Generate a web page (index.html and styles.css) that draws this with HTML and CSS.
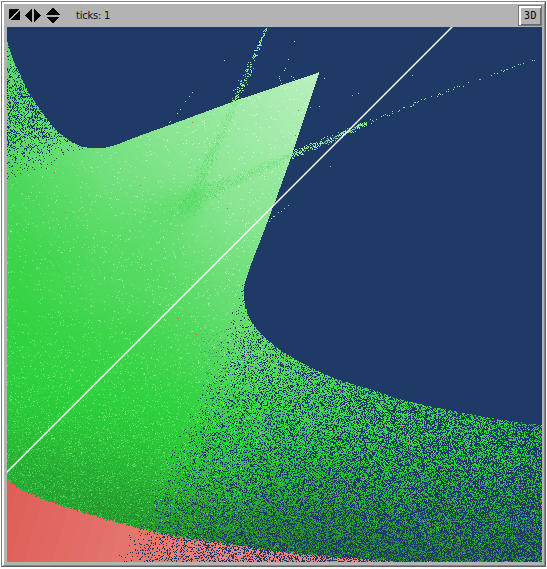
FILE: index.html
```html
<!DOCTYPE html>
<html lang="en">
<head>
<meta charset="utf-8">
<title>View</title>
<link rel="stylesheet" href="styles.css">
</head>
<body>
<main class="frame">
  <div class="panel">
    <header class="toolbar">
      <svg class="icons" width="52" height="17" viewBox="0 0 52 17" shape-rendering="crispEdges">
        <path d="M0 2h10L0 12zM11 3v10H1z"/>
        <path d="M23 1.5v14l-7-7zM25 1.5v14l7-7z"/>
        <path d="M36.500 7.500h14l-7-7zM36.500 9.500h14l-7 7z"/>
      </svg>
      <span class="ticks">ticks: 1</span>
      <button class="view3d">3D</button>
    </header>
    <canvas class="world" id="world" width="535" height="535"></canvas>
  </div>
</main>
<script src="world.js"></script>
</body>
</html>
```
FILE: styles.css
```css
body {
  margin: 0;
  background: #fff;
}

.frame {
  box-sizing: border-box;
  width: 545px;
  height: 566px;
  margin: 1px 0 0 1px;
  border: 1px solid #7b827f;
  border-right: 1px solid #5e5e5e;
  border-bottom: 1px solid #5e5e5e;
}

.panel {
  box-sizing: border-box;
  width: 543px;
  height: 564px;
  border: 2px solid #fff;
  border-right: 1px solid #858585;
  border-bottom: 1px solid #858585;
  padding: 0 2px 0 3px;
  background: #b3b3b3;
}

.toolbar {
  display: flex;
  align-items: flex-start;
  height: 23px;
}

.icons {
  margin: 3px 0 0 2px;
  fill: #000;
}

.ticks {
  margin: 4px 0 0 15px;
  font: 11px/15px "DejaVu Sans Condensed", "DejaVu Sans", sans-serif;
  letter-spacing: -0.2px;
  color: #111;
  white-space: nowrap;
}

.view3d {
  box-sizing: border-box;
  width: 24px;
  height: 21px;
  margin: 1px 0 0 auto;
  padding: 1px 0 0 1px;
  border: 1px solid #777;
  background: #b3b3b3;
  box-shadow: inset 2px 2px 0 #fff, inset -1px -1px 0 #686868;
  font: 10px/18px "DejaVu Sans Mono", monospace;
  letter-spacing: 0.5px;
  color: #000;
}

.world {
  display: block;
  width: 535px;
  height: 535px;
}
```
FILE: world.js
```js
(function () {
  var SIZE = 535, OX = 7, OY = 27;
  var ctx = document.getElementById('world').getContext('2d');
  var img = ctx.createImageData(SIZE, SIZE);
  var seed = 20117;

  function rnd() {
    seed = (seed + 0x6D2B79F5) | 0;
    var t = Math.imul(seed ^ (seed >>> 15), 1 | seed);
    t = (t + Math.imul(t ^ (t >>> 7), 61 | t)) ^ t;
    return ((t ^ (t >>> 14)) >>> 0) / 4294967296;
  }

  function lerp(table, k) {
    if (k <= table[0][0]) return table[0][1];
    for (var i = 1; i < table.length; i++) {
      if (k <= table[i][0]) {
        var a = table[i - 1], b = table[i];
        return a[1] + (b[1] - a[1]) * (k - a[0]) / (b[0] - a[0]);
      }
    }
    return table[table.length - 1][1];
  }

  // Upper limit of the set, y by x, left of the tip
  var crest = [[7, 42], [12, 58], [20, 75], [28, 92], [40, 110], [53, 127], [62, 135], [70, 141],
    [80, 146], [90, 147.5], [100, 148], [108, 146.5], [117, 144], [133, 137.5], [180, 120.5],
    [233, 101], [280, 85], [318, 72]];
  // Right flank, x by y
  var flank = [[72, 319], [137, 297], [153, 292], [200, 275], [233, 262.5], [260, 252],
    [277, 246], [288, 243.3], [296, 243.3], [303, 244.5]];
  // Lower right limit, y by x
  var bowl = [[244, 303], [250, 320], [260, 333], [270, 342], [280, 350], [300, 362], [320, 372],
    [337, 379], [377, 391], [403, 400], [440, 408], [487, 417], [542, 425]];
  // Top of the red set, y by x
  var shore = [[7, 480], [25, 491], [50, 501], [70, 508], [100, 517], [127, 525], [157, 532],
    [180, 537], [213, 542], [247, 547], [283, 552], [320, 555.5], [360, 559], [410, 562]];
  // Left limit of the scattered area, x by y
  var scatter = [[280, 241], [300, 238], [330, 226], [360, 216], [390, 204], [440, 177],
    [490, 155], [525, 138], [562, 120]];

  // Shade: 0 is pure green, 1 white, -1 black
  var shades = [[7, 50, .2], [7, 110, .18], [7, 200, .12], [7, 260, .07], [7, 320, .02],
    [7, 380, 0], [7, 430, -.06], [7, 475, -.22], [60, 140, .27], [60, 200, .21], [60, 280, .12],
    [60, 350, .05], [60, 420, -.01], [60, 465, -.14], [60, 500, -.27], [110, 150, .38],
    [140, 210, .3], [120, 270, .19], [120, 340, .09], [120, 400, .01], [120, 460, -.1],
    [120, 520, -.3], [180, 125, .46], [180, 170, .42], [180, 220, .33], [180, 290, .22],
    [180, 350, .12], [180, 410, .02], [180, 460, -.08], [180, 530, -.3], [240, 105, .54],
    [240, 150, .51], [240, 200, .44], [240, 260, .36], [235, 310, .28], [245, 360, .21],
    [240, 420, .06], [240, 470, -.1], [240, 540, -.34], [280, 90, .62], [280, 140, .57],
    [270, 200, .48], [316, 74, .71], [300, 120, .62], [310, 375, .18], [310, 420, .07],
    [310, 480, -.14], [310, 545, -.35], [390, 400, .13], [390, 440, .04], [390, 490, -.15],
    [390, 555, -.35], [470, 420, .07], [470, 460, -.03], [470, 510, -.2], [470, 558, -.33],
    [540, 430, 0], [540, 470, -.09], [540, 520, -.24], [540, 560, -.32]];
  var STEP = 8, cells = Math.ceil(SIZE / STEP) + 2, field = [];
  for (var gy = 0; gy < cells; gy++) {
    for (var gx = 0; gx < cells; gx++) {
      var sw = 0, sv = 0;
      shades.forEach(function (s) {
        var dx = gx * STEP + OX - s[0], dy = gy * STEP + OY - s[1];
        var w = Math.exp(-(dx * dx + dy * dy) / 1700) + 1e-9 / (1 + dx * dx + dy * dy);
        sw += w;
        sv += w * s[2];
      });
      field.push(sv / sw);
    }
  }
  function shade(x, y) {
    var fx = (x - OX) / STEP, fy = (y - OY) / STEP, ix = fx | 0, iy = fy | 0;
    fx -= ix;
    fy -= iy;
    var k = iy * cells + ix;
    return (field[k] * (1 - fx) + field[k + 1] * fx) * (1 - fy) +
      (field[k + cells] * (1 - fx) + field[k + cells + 1] * fx) * fy;
  }

  function green(v) {
    v = Math.max(-.55, Math.min(.85, v));
    if (v >= 0) return [43 + 212 * v, 209 + 46 * v, 59 + 196 * v];
    return [43 * (1 + v * .4), 209 * (1 + v), 59 * (1 + v * .75)];
  }

  function put(x, y, c) {
    x -= OX;
    y -= OY;
    if (x < 0 || y < 0 || x >= SIZE || y >= SIZE) return;
    var k = (y * SIZE + x) * 4;
    img.data[k] = c[0];
    img.data[k + 1] = c[1];
    img.data[k + 2] = c[2];
    img.data[k + 3] = 255;
  }

  var navy = [32, 58, 104];

  function inside(x, y) {
    if (x < 319 && y < 303) return y >= lerp(crest, x) && x <= lerp(flank, y);
    if (x < 244) return true;
    return y >= lerp(bowl, x);
  }

  function gap(x, y) {
    var d = x - lerp(scatter, y);
    if (y > 280 && d > -6) {
      return lerp([[-6, 0], [0, .03], [10, .11], [30, .22], [90, .34], [200, .49], [400, .6]], d);
    }
    if (x < 95 && y < 190) {
      var e = 187 - (x - 7) * .44 - y;
      return lerp([[0, 0], [10, .05], [25, .18], [50, .36], [90, .38], [115, .2], [145, .12]], e);
    }
    return 0;
  }

  // Greener haze down-left of the point where the rays meet
  function haze(x, y) {
    var u = ((195 - x) * .8 + (y - 195) * .6), w = ((x - 195) * .6 + (y - 195) * .8);
    if (u < -15 || u > 110) return 0;
    var spread = 7 + Math.max(0, u) * .3;
    return Math.exp(-w * w / (2 * spread * spread)) *
      lerp([[-15, 0], [0, .09], [30, .07], [110, 0]], u);
  }

  for (var y = OY; y < OY + SIZE; y++) {
    for (var x = OX; x < OX + SIZE; x++) {
      var c = navy;
      if (inside(x, y) && rnd() >= gap(x, y)) {
        var off = y - lerp(shore, x);
        if (off + (rnd() - .5) * 3 > 0) {
          var t = Math.min(1, Math.max(0, (x - 7 + (562 - y) * -.3 + 20) / 230));
          t = Math.round(t * 16) / 16;
          c = [223 + 8 * t, 95 + 37 * t, 88 + 37 * t];
        } else {
          var v = shade(x, y);
          v = Math.round(v * 80) / 80;
          var hz = haze(x, y);
          if (hz > .005) v -= hz * (.6 + rnd() * .8);
          var rough = lerp([[150, .008], [300, .014], [400, .035], [450, .085], [540, .14]], y);
          v += (rnd() + rnd() - 1) * rough;
          var r = rnd();
          if (r < lerp([[150, .018], [320, .035], [430, .1], [530, .14]], y) * (x > 260 && y > 380 ? .3 : 1)) {
            v += .12 + rnd() * .28;
          }
          c = green(v);
          if (x > 200 && y > 330 && rnd() < .1) {
            c = [c[0] * .6 + navy[0] * .5, c[1] * .6 + 40, c[2] * .6 + 50];
          }
        }
      }
      put(x, y, c);
    }
  }

  // Two scattered rays that meet near (195, 195)
  function ray(xs, ys, count, width, bias) {
    for (var i = 0; i < count; i++) {
      var t = Math.pow(rnd(), bias) * 100;
      var w = lerp(width, t);
      var x = Math.round(lerp(xs, t) + (rnd() + rnd() - 1) * w);
      var y = Math.round(lerp(ys, t) + (rnd() + rnd() - 1) * w);
      if (inside(x, y)) put(x, y, green(shade(x, y) - .1 - rnd() * .1));
      else put(x, y, green(.3 + rnd() * .28));
    }
  }
  ray([[0, 188], [25, 204], [50, 221], [70, 237], [85, 252], [100, 266]],
    [[0, 207], [25, 170], [50, 133], [70, 96], [85, 61], [100, 28]],
    820, [[0, 12], [25, 9], [50, 5.5], [70, 6], [85, 3.5], [100, 1]], 1.5);
  ray([[0, 185], [25, 228], [50, 272], [70, 302], [85, 332], [100, 366]],
    [[0, 203], [25, 182], [50, 163], [70, 149.5], [85, 138], [100, 123]],
    900, [[0, 12], [25, 8], [50, 5], [70, 5], [85, 4], [100, 2]], 1.35);

  var dots = [[360, 123], [362, 123], [364, 123], [366, 122], [366, 125], [370, 119], [372, 120],
    [373, 121], [371, 123], [376, 119], [381, 116], [383, 115], [385, 114], [387, 115], [389, 115],
    [392, 111], [392, 113], [398, 111], [399, 110], [403, 107], [404, 107], [410, 106], [411, 106],
    [413, 105], [413, 104], [414, 102], [415, 102], [417, 102], [418, 101], [421, 99], [424, 99],
    [425, 98], [431, 96], [437, 96], [438, 94], [439, 93], [440, 94], [442, 94], [446, 91],
    [448, 89], [448, 91], [453, 89], [454, 87], [457, 86], [459, 86], [463, 86], [468, 82],
    [479, 79], [480, 79], [491, 75], [494, 73], [497, 73], [501, 70], [503, 71], [504, 70],
    [506, 69], [507, 69], [512, 67], [514, 66], [518, 64], [520, 64], [523, 63], [532, 60], [534, 60],
    [412, 75], [224, 60], [294, 41], [288, 59], [285, 68], [284, 70], [279, 76], [279, 78],
    [281, 83], [280, 80], [291, 76], [293, 77], [294, 79], [290, 82], [324, 78], [319, 106],
    [310, 107], [330, 166], [352, 95], [358, 93], [192, 92], [189, 96], [185, 101], [180, 109],
    [177, 113], [170, 121], [169, 122], [269, 221], [271, 218], [273, 216], [274, 216], [278, 212],
    [281, 211], [284, 208], [288, 205], [264, 30], [266, 28]];
  dots.forEach(function (p) { put(p[0], p[1], green(.3 + rnd() * .3)); });

  [[54, 172], [14, 185], [140, 185], [192, 122], [298, 110], [295, 135], [65, 212], [227, 208],
    [196, 334], [178, 318], [246, 354], [221, 345], [408, 442], [402, 426], [332, 430]
  ].forEach(function (p) { put(p[0], p[1], [232, 82, 62]); });

  ctx.putImageData(img, 0, 0);

  // Diagonal
  ctx.strokeStyle = '#fff';
  ctx.lineWidth = 1.4;
  ctx.beginPath();
  ctx.moveTo(-1, 446);
  ctx.lineTo(446, -1);
  ctx.stroke();
})();
```
